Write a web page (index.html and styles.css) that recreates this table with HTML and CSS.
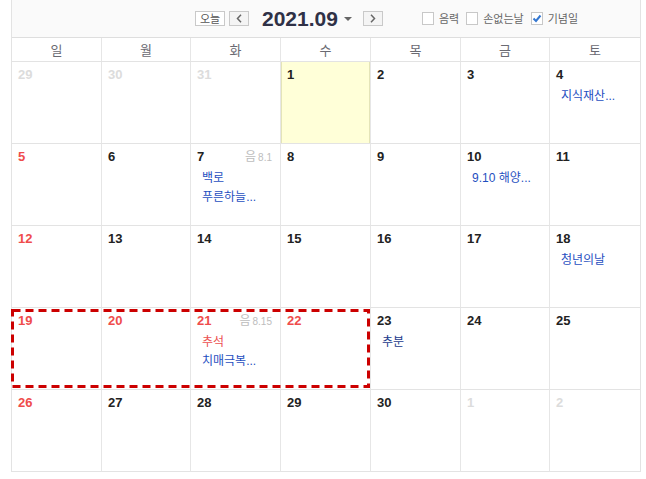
FILE: index.html
```html
<!DOCTYPE html>
<html lang="ko">
<head>
<meta charset="utf-8">
<title>달력</title>
<link rel="stylesheet" href="styles.css">
</head>
<body>
<div class="cal">
  <div class="toolbar">
    <div class="nav">
      <button class="btn today-btn">오늘</button>
      <button class="btn arrow-btn" aria-label="이전">
        <svg width="6" height="9" viewBox="0 0 6 9"><path d="M5 0.8 L1.5 4.5 L5 8.2" fill="none" stroke="#666" stroke-width="1.5"/></svg>
      </button>
      <span class="title">2021.09</span>
      <span class="caret"></span>
      <button class="btn arrow-btn" aria-label="다음">
        <svg width="6" height="9" viewBox="0 0 6 9"><path d="M1 0.8 L4.5 4.5 L1 8.2" fill="none" stroke="#666" stroke-width="1.5"/></svg>
      </button>
    </div>
    <div class="opts">
      <label class="opt"><span class="box"></span>음력</label>
      <label class="opt"><span class="box"></span>손없는날</label>
      <label class="opt"><span class="box checked"><svg width="10" height="9" viewBox="0 0 10 9"><path d="M1.5 4.5 L4 7 L8.5 1.5" fill="none" stroke="#3477d0" stroke-width="2"/></svg></span>기념일</label>
    </div>
  </div>

  <div class="head">
    <div class="hd">일</div><div class="hd">월</div><div class="hd">화</div><div class="hd">수</div><div class="hd">목</div><div class="hd">금</div><div class="hd">토</div>
  </div>

  <div class="body">
    <div class="cell"><div class="top"><span class="num other">29</span></div></div>
    <div class="cell"><div class="top"><span class="num other">30</span></div></div>
    <div class="cell"><div class="top"><span class="num other">31</span></div></div>
    <div class="cell today"><div class="top"><span class="num">1</span></div></div>
    <div class="cell"><div class="top"><span class="num">2</span></div></div>
    <div class="cell"><div class="top"><span class="num">3</span></div></div>
    <div class="cell"><div class="top"><span class="num">4</span></div><ul class="events"><li class="ev">지식재산<span class="dots">...</span></li></ul></div>

    <div class="cell"><div class="top"><span class="num red">5</span></div></div>
    <div class="cell"><div class="top"><span class="num">6</span></div></div>
    <div class="cell"><div class="top"><span class="num">7</span><span class="lunar">음<small>8.1</small></span></div><ul class="events"><li class="ev">백로</li><li class="ev">푸른하늘<span class="dots">...</span></li></ul></div>
    <div class="cell"><div class="top"><span class="num">8</span></div></div>
    <div class="cell"><div class="top"><span class="num">9</span></div></div>
    <div class="cell"><div class="top"><span class="num">10</span></div><ul class="events"><li class="ev"><span class="lat">9.10</span> 해양<span class="dots">...</span></li></ul></div>
    <div class="cell"><div class="top"><span class="num">11</span></div></div>

    <div class="cell"><div class="top"><span class="num red">12</span></div></div>
    <div class="cell"><div class="top"><span class="num">13</span></div></div>
    <div class="cell"><div class="top"><span class="num">14</span></div></div>
    <div class="cell"><div class="top"><span class="num">15</span></div></div>
    <div class="cell"><div class="top"><span class="num">16</span></div></div>
    <div class="cell"><div class="top"><span class="num">17</span></div></div>
    <div class="cell"><div class="top"><span class="num">18</span></div><ul class="events"><li class="ev">청년의날</li></ul></div>

    <div class="cell"><div class="top"><span class="num red">19</span></div></div>
    <div class="cell"><div class="top"><span class="num red">20</span></div></div>
    <div class="cell"><div class="top"><span class="num red">21</span><span class="lunar">음<small>8.15</small></span></div><ul class="events"><li class="ev holiday">추석</li><li class="ev">치매극복<span class="dots">...</span></li></ul></div>
    <div class="cell"><div class="top"><span class="num red">22</span></div></div>
    <div class="cell"><div class="top"><span class="num">23</span></div><ul class="events"><li class="ev dark">추분</li></ul></div>
    <div class="cell"><div class="top"><span class="num">24</span></div></div>
    <div class="cell"><div class="top"><span class="num">25</span></div></div>

    <div class="cell"><div class="top"><span class="num red">26</span></div></div>
    <div class="cell"><div class="top"><span class="num">27</span></div></div>
    <div class="cell"><div class="top"><span class="num">28</span></div></div>
    <div class="cell"><div class="top"><span class="num">29</span></div></div>
    <div class="cell"><div class="top"><span class="num">30</span></div></div>
    <div class="cell"><div class="top"><span class="num other">1</span></div></div>
    <div class="cell"><div class="top"><span class="num other">2</span></div></div>

    <svg class="mark" width="360" height="80" viewBox="0 0 360 80"><rect x="1.5" y="1.5" width="356" height="76" fill="none" stroke="#cc0000" stroke-width="3" stroke-dasharray="8 5"/></svg>
  </div>
</div>
</body>
</html>
```

FILE: styles.css
```css
* { box-sizing: border-box; }
html, body { margin: 0; padding: 0; background: #fff; }
body {
  font-family: "Noto Sans CJK KR", "Liberation Sans", sans-serif;
  color: #333;
}
.cal {
  margin-left: 11px;
  width: 630px;
  border-left: 1px solid #e3e3e3;
  border-right: 1px solid #e3e3e3;
}
.toolbar {
  height: 37px;
  background: #fafafa;
  display: flex;
  align-items: center;
  padding-left: 183px;
}
.nav { display: flex; align-items: center; }
.btn {
  margin: 0;
  padding: 0;
  height: 15px;
  border: 1px solid #c9c9c9;
  background: #fff;
  display: flex;
  align-items: center;
  justify-content: center;
  font-family: "Noto Sans CJK KR", sans-serif;
  font-size: 11px;
  color: #555;
  line-height: 1;
}
.today-btn { width: 30px; }
.arrow-btn { width: 20px; margin-left: 4px; background: #f4f4f4; }
.title {
  margin-left: 13px;
  font-family: "Liberation Sans", sans-serif;
  font-weight: bold;
  font-size: 21px;
  color: #2f3146;
  line-height: 1;
}
.caret {
  margin-left: 6px;
  width: 0; height: 0;
  border-left: 4px solid transparent;
  border-right: 4px solid transparent;
  border-top: 4px solid #666;
}
.caret + .arrow-btn { margin-left: 11px; }
.opts { display: flex; align-items: center; margin-left: 39px; }
.opt {
  display: flex;
  align-items: center;
  font-size: 11px;
  color: #666;
  margin-right: 7px;
  line-height: 1;
}
.box {
  width: 12px; height: 13px;
  border: 1px solid #c8c8c8;
  background: #fff;
  margin-right: 5px;
  display: flex; align-items: center; justify-content: center;
}
.head {
  display: grid;
  grid-template-columns: 90px 89px 90px 90px 90px 89px 90px;
  border-top: 1px solid #dedede;
  border-bottom: 1px solid #e3e3e3;
  height: 25px;
}
.hd {
  border-right: 1px solid #e6e6e6;
  text-align: center;
  font-size: 13px;
  line-height: 23px;
  color: #6a6a72;
}
.hd:last-child { border-right: none; }
.body {
  position: relative;
  display: grid;
  grid-template-columns: 90px 89px 90px 90px 90px 89px 90px;
  grid-auto-rows: 82px;
}
.cell {
  border-right: 1px solid #e6e6e6;
  border-bottom: 1px solid #e3e3e3;
  padding: 5px 8px 0 6px;
}
.cell:nth-child(7n) { border-right: none; }
.cell.today { background: #ffffd8; box-shadow: inset 1px 0 0 #e4e4b8, inset -1px 0 0 #e4e4b8; }
.top { display: flex; justify-content: space-between; align-items: center; height: 16px; }
.num {
  font-family: "Liberation Sans", sans-serif;
  font-weight: bold;
  font-size: 13px;
  line-height: 16px;
  color: #222;
}
.num.red { color: #ef4c4c; }
.num.other { color: #dcdcdc; }
.lunar { font-size: 12px; color: #bdbdbd; line-height: 16px; }
.lunar small { font-family: "Liberation Sans", sans-serif; font-size: 10px; margin-left: 2px; }
.events { list-style: none; margin: 2px 0 0 5px; padding: 0; }
.ev {
  font-size: 12px;
  line-height: 19px;
  color: #1f4fbf;
  white-space: nowrap;
}
.ev.holiday { color: #ec5050; }
.ev.dark { color: #1a3a8c; }
.dots, .lat { font-family: "Liberation Sans", sans-serif; }
.mark { position: absolute; left: -1px; top: 247px; }
```
